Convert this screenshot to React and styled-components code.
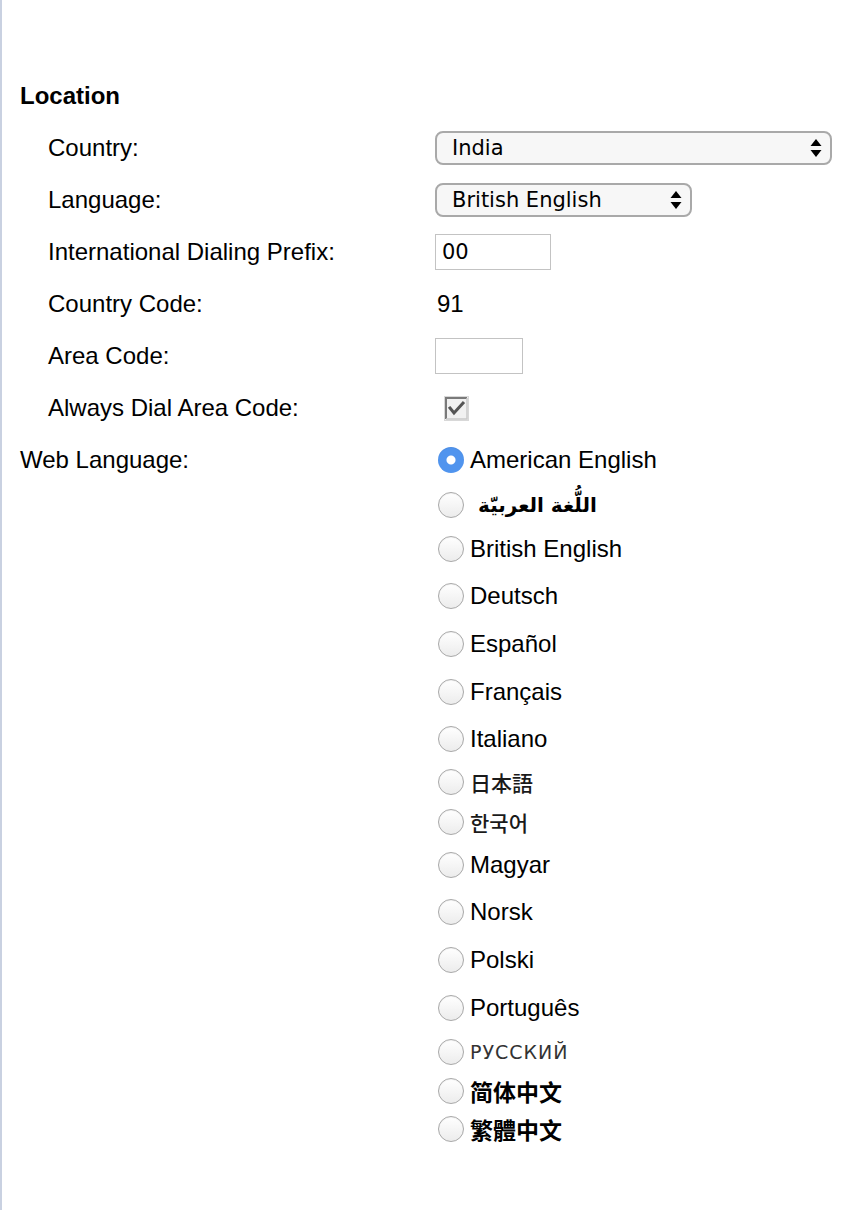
import React, { useState } from "react";
import styled, { createGlobalStyle } from "styled-components";

const GlobalStyle = createGlobalStyle`
  html, body {
    margin: 0;
    padding: 0;
    background: #ffffff;
  }
  body {
    font-family: "Liberation Sans", Arial, sans-serif;
    color: #000;
  }
`;

const Page = styled.div`
  min-height: 1210px;
  box-sizing: border-box;
  border-left: 2px solid #c9d1e1;
  padding: 70px 0 0 18px;
  font-size: 24px;
`;

const Section = styled.div`
  display: flex;
  flex-direction: column;
`;

const Heading = styled.div`
  height: 52px;
  display: flex;
  align-items: center;
  font-weight: bold;
`;

const FormRow = styled.div`
  display: grid;
  grid-template-columns: 415px 1fr;
  align-items: ${(p) => (p.$top ? "start" : "center")};
  min-height: 52px;
`;

const Label = styled.div`
  padding-left: ${(p) => (p.$indent ? "28px" : "0")};
  line-height: ${(p) => (p.$top ? "52px" : "normal")};
`;

const SelectWrap = styled.div`
  position: relative;
  width: ${(p) => p.$width}px;
  height: 34px;
`;

const Select = styled.select`
  appearance: none;
  -webkit-appearance: none;
  width: 100%;
  height: 100%;
  box-sizing: border-box;
  border: 2px solid #a9a9a9;
  border-radius: 8px;
  background: #f7f7f7;
  font-family: "DejaVu Sans", "Liberation Sans", sans-serif;
  font-size: 21px;
  color: #000;
  padding: 0 30px 0 15px;
  outline: none;
`;

const Arrows = styled.svg`
  position: absolute;
  right: 10px;
  top: 8px;
  pointer-events: none;
`;

const TextInput = styled.input`
  width: ${(p) => p.$width}px;
  height: 36px;
  box-sizing: border-box;
  border: 1px solid #c3c3c3;
  padding: 0 6px;
  font-family: "DejaVu Sans", "Liberation Sans", sans-serif;
  font-size: 21px;
  color: #000;
  outline: none;
`;

const Value = styled.div`
  padding-left: 2px;
`;

const CheckWrap = styled.div`
  padding-left: 9px;
  height: 26px;
  display: flex;
  align-items: center;
`;

const RadioList = styled.div`
  display: flex;
  flex-direction: column;
  padding-top: 2px;
`;

const RadioRow = styled.label`
  display: flex;
  align-items: center;
  height: ${(p) => p.$h}px;
  gap: 6px;
`;

const Radio = styled.input`
  appearance: none;
  -webkit-appearance: none;
  margin: 0 0 0 3px;
  width: 26px;
  height: 26px;
  border-radius: 50%;
  box-sizing: border-box;
  flex-shrink: 0;
  border: 1px solid #a8a8a8;
  background: linear-gradient(#ffffff, #ececec);
  box-shadow: inset 0 1px 1px rgba(0, 0, 0, 0.05);

  &:checked {
    border: none;
    background: radial-gradient(circle, #ffffff 0 4px, #5094ee 5px);
  }
`;

const RadioText = styled.span`
  font-family: ${(p) => p.$font || '"Liberation Sans", Arial, sans-serif'};
  font-size: ${(p) => p.$size || 24}px;
  font-weight: ${(p) => p.$weight || 400};
  color: ${(p) => p.$color || "#000"};
  padding-left: ${(p) => p.$pad || 0}px;
  letter-spacing: ${(p) => p.$ls || 0}px;
`;

const languages = [
  { id: "en-us", text: "American English", h: 48 },
  { id: "ar", text: "اللُّغة العربيّة", h: 42, font: '"DejaVu Sans", sans-serif', size: 20, weight: 700, pad: 8 },
  { id: "en-gb", text: "British English", h: 45 },
  { id: "de", text: "Deutsch", h: 49 },
  { id: "es", text: "Español", h: 48 },
  { id: "fr", text: "Français", h: 48 },
  { id: "it", text: "Italiano", h: 46 },
  { id: "ja", text: "日本語", h: 40, font: '"Noto Sans CJK JP", sans-serif', size: 21, weight: 500, color: "#1a1a1a" },
  { id: "ko", text: "한국어", h: 40, font: '"Noto Sans CJK KR", sans-serif', size: 21, weight: 500, color: "#1a1a1a" },
  { id: "hu", text: "Magyar", h: 46 },
  { id: "no", text: "Norsk", h: 48 },
  { id: "pl", text: "Polski", h: 48 },
  { id: "pt", text: "Português", h: 47 },
  { id: "ru", text: "РУССКИЙ", h: 41, font: '"DejaVu Sans", sans-serif', size: 19, color: "#333", ls: 1 },
  { id: "zh-cn", text: "简体中文", h: 38, font: '"Noto Sans CJK SC", sans-serif', size: 23, weight: 700 },
  { id: "zh-tw", text: "繁體中文", h: 38, font: '"Noto Sans CJK TC", sans-serif', size: 23, weight: 700 },
];

function SelectArrows() {
  return (
    <Arrows width="12" height="18" viewBox="0 0 12 18">
      <path d="M6 0 L11.5 7 H0.5 Z" fill="#000" />
      <path d="M6 18 L11.5 11 H0.5 Z" fill="#000" />
    </Arrows>
  );
}

function DisabledCheck() {
  return (
    <svg width="25" height="25" viewBox="0 0 25 25">
      <rect x="0.5" y="0.5" width="24" height="24" fill="#f1f1f1" stroke="#d8d8d8" />
      <path d="M2 23 V2 H23" fill="none" stroke="#7a7a7a" strokeWidth="2" />
      <path d="M23 2 V23 H2" fill="none" stroke="#c9c9c9" strokeWidth="1.5" />
      <path d="M6 12 L10 17 L19 7" fill="none" stroke="#555" strokeWidth="3" strokeLinecap="square" />
    </svg>
  );
}

export default function App() {
  const [lang, setLang] = useState("en-us");

  return (
    <>
      <GlobalStyle />
      <Page>
        <Section>
          <Heading>Location</Heading>
          <FormRow>
            <Label $indent>Country:</Label>
            <SelectWrap $width={397}>
              <Select defaultValue="India">
                <option>India</option>
              </Select>
              <SelectArrows />
            </SelectWrap>
          </FormRow>
          <FormRow>
            <Label $indent>Language:</Label>
            <SelectWrap $width={257}>
              <Select defaultValue="British English">
                <option>British English</option>
              </Select>
              <SelectArrows />
            </SelectWrap>
          </FormRow>
          <FormRow>
            <Label $indent>International Dialing Prefix:</Label>
            <TextInput $width={116} defaultValue="00" />
          </FormRow>
          <FormRow>
            <Label $indent>Country Code:</Label>
            <Value>91</Value>
          </FormRow>
          <FormRow>
            <Label $indent>Area Code:</Label>
            <TextInput $width={88} defaultValue="" />
          </FormRow>
          <FormRow>
            <Label $indent>Always Dial Area Code:</Label>
            <CheckWrap>
              <DisabledCheck />
            </CheckWrap>
          </FormRow>
          <FormRow $top>
            <Label $top>Web Language:</Label>
            <RadioList>
              {languages.map((l) => (
                <RadioRow key={l.id} $h={l.h}>
                  <Radio
                    type="radio"
                    name="weblang"
                    checked={lang === l.id}
                    onChange={() => setLang(l.id)}
                  />
                  <RadioText
                    $font={l.font}
                    $size={l.size}
                    $weight={l.weight}
                    $color={l.color}
                    $pad={l.pad}
                    $ls={l.ls}
                  >
                    {l.text}
                  </RadioText>
                </RadioRow>
              ))}
            </RadioList>
          </FormRow>
        </Section>
      </Page>
    </>
  );
}
